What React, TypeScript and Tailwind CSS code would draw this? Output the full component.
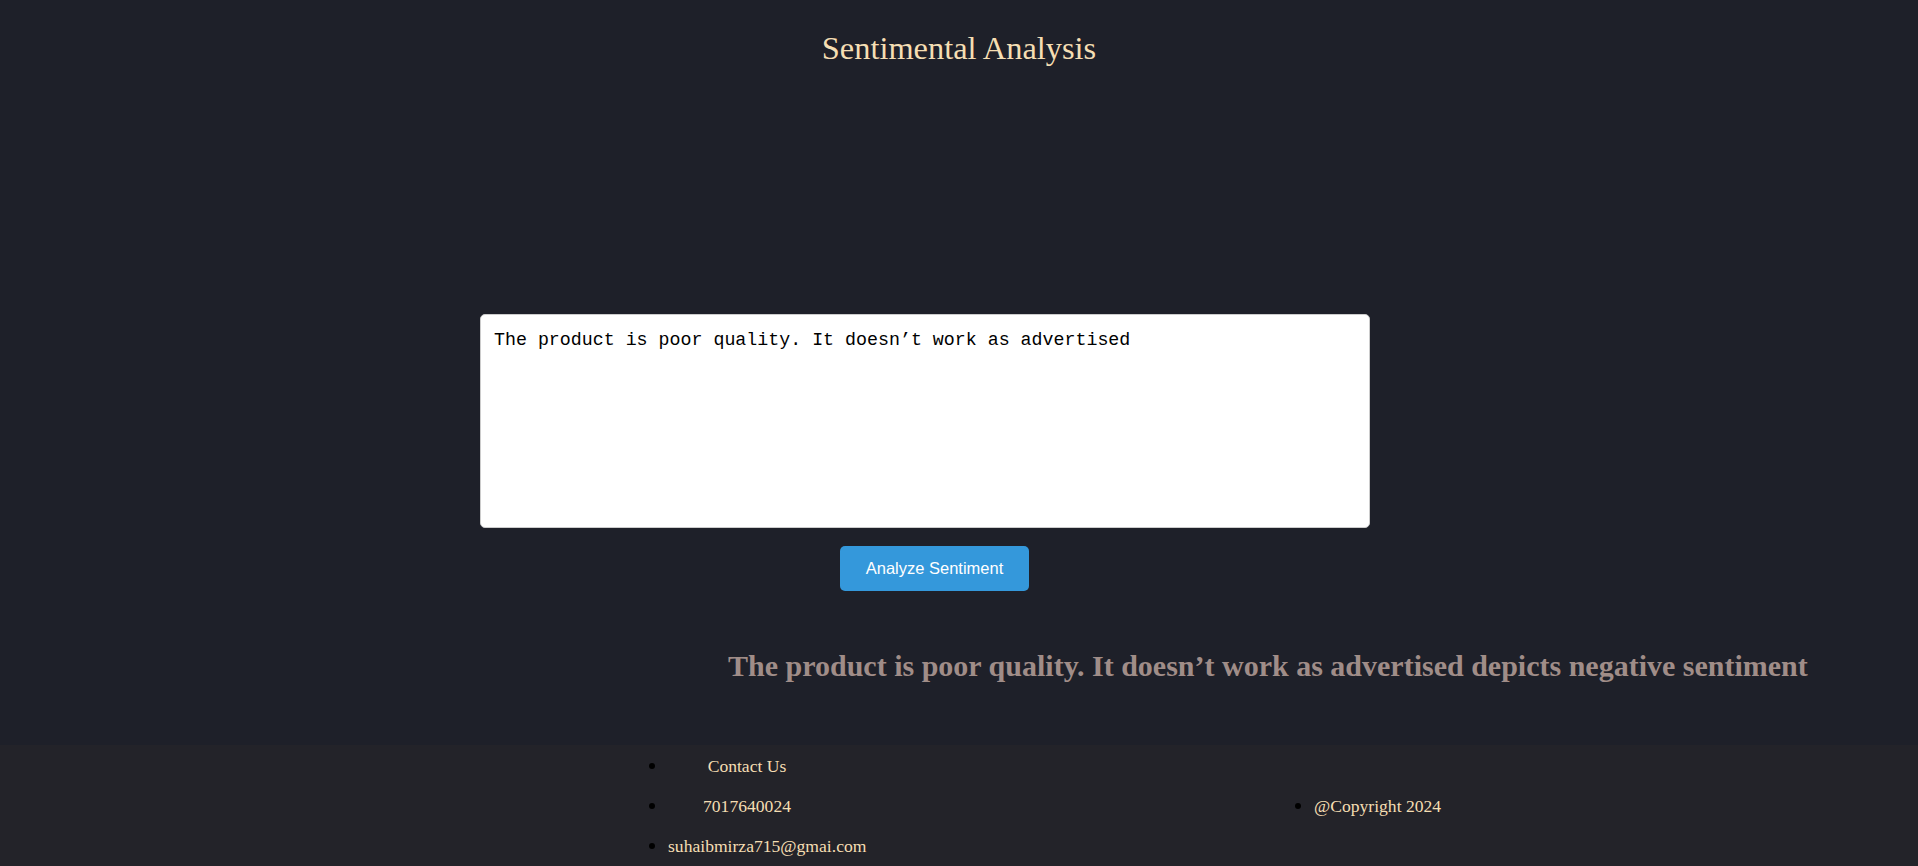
const sentence = "The product is poor quality. It doesn’t work as advertised";

export default function App() {
  return (
    <div className="bg-[#1e2029] font-['Liberation_Serif',serif]">
      <main className="pb-[62px]">
        <h1 className="pt-[30px] text-center text-[32.4px] leading-[36px] font-normal text-[#f5deb3]">
          Sentimental Analysis
        </h1>

        <div className="mt-[248px] ml-[480px] flex flex-col items-start">
          <textarea
            defaultValue={sentence}
            className="w-[890px] h-[214px] resize-none rounded-[5px] border border-[#cccccc] bg-white px-[13px] pt-[15px] font-['Liberation_Mono',monospace] text-[18.3px] leading-[21px] text-black outline-none"
          />
          <button className="mt-[18px] ml-[360px] h-[45px] w-[189px] rounded-[5px] bg-[#3498db] font-['Liberation_Sans',sans-serif] text-[16.5px] text-white">
            Analyze Sentiment
          </button>
        </div>

        <p className="mt-[58px] pl-[728px] text-[30px] leading-[34px] font-bold text-[#a08d88] whitespace-nowrap">
          {sentence} depicts negative sentiment
        </p>
      </main>

      <footer className="flex bg-[#232329] pt-[10px] pb-[20px] text-[17.6px] leading-[20px] text-[#f5deb3]">
        <ul className="ml-[668px] flex w-[158px] list-disc flex-col gap-[19px]">
          <li className="text-center marker:text-black marker:text-[20px]">Contact Us</li>
          <li className="text-center marker:text-black marker:text-[20px]">7017640024</li>
          <li className="whitespace-nowrap marker:text-black marker:text-[20px]">suhaibmirza715@gmai.com</li>
        </ul>
        <ul className="ml-[488px] list-disc self-center">
          <li className="marker:text-black marker:text-[20px]">@Copyright 2024</li>
        </ul>
      </footer>
    </div>
  );
}
